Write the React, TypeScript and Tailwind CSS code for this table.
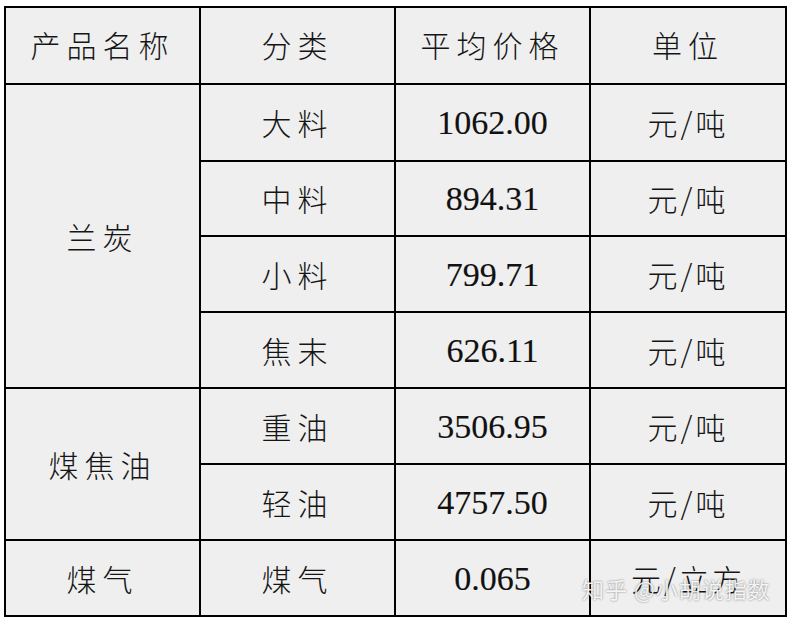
const rows = [
  { cat: '大料', price: '1062.00', unit: '元/吨' },
  { cat: '中料', price: '894.31', unit: '元/吨' },
  { cat: '小料', price: '799.71', unit: '元/吨' },
  { cat: '焦末', price: '626.11', unit: '元/吨' },
  { cat: '重油', price: '3506.95', unit: '元/吨' },
  { cat: '轻油', price: '4757.50', unit: '元/吨' },
  { cat: '煤气', price: '0.065', unit: '元/立方' },
]

const cjk = "font-['Noto_Sans_CJK_SC',sans-serif] font-light text-[30px] tracking-[6px] text-[#151515]"
const unit = "font-['Noto_Sans_CJK_SC',sans-serif] font-light text-[30px] tracking-[3px] text-[#151515]"
const num = "font-['Liberation_Serif','Times_New_Roman',serif] text-[34px] text-[#111] [-webkit-text-stroke:0.15px_#111]"
const cell = 'flex items-center justify-center bg-[#efefef]'

export default function App() {
  return (
    <div className="relative h-[621px] w-[790px] bg-white pl-[4px] pt-[6px]">
      <div className="grid w-[783px] grid-cols-[193px_193px_193px_194px] grid-rows-[75px_75px_73px_74px_74px_74px_74px_74px] gap-[2px] bg-black p-[2px]">
        <div className={`${cell} pb-[3px]`}><span className={cjk}>产品名称</span></div>
        <div className={`${cell} pb-[3px]`}><span className={cjk}>分类</span></div>
        <div className={`${cell} pb-[3px]`}><span className={cjk}>平均价格</span></div>
        <div className={`${cell} pb-[3px]`}><span className={cjk}>单位</span></div>

        <div className={`${cell} col-start-1 row-span-4 row-start-2`}><span className={cjk}>兰炭</span></div>
        <div className={`${cell} col-start-1 row-span-2 row-start-6`}><span className={cjk}>煤焦油</span></div>
        <div className={`${cell} col-start-1 row-start-8`}><span className={cjk}>煤气</span></div>

        {rows.map((r, i) => (
          <div key={r.cat + i} className="contents">
            <div className={`${cell} col-start-2`} style={{ gridRowStart: i + 2 }}>
              <span className={cjk}>{r.cat}</span>
            </div>
            <div className={`${cell} col-start-3`} style={{ gridRowStart: i + 2 }}>
              <span className={num}>{r.price}</span>
            </div>
            <div className={`${cell} col-start-4`} style={{ gridRowStart: i + 2 }}>
              <span className={unit}>{r.unit}</span>
            </div>
          </div>
        ))}
      </div>

      <div className="absolute left-[582px] top-[572px] font-['Noto_Sans_CJK_SC',sans-serif] text-[22px] tracking-[1px] text-white/90 [text-shadow:0_0_2px_rgba(0,0,0,0.55)]">
        知乎 @小胡说指数
      </div>
    </div>
  )
}
